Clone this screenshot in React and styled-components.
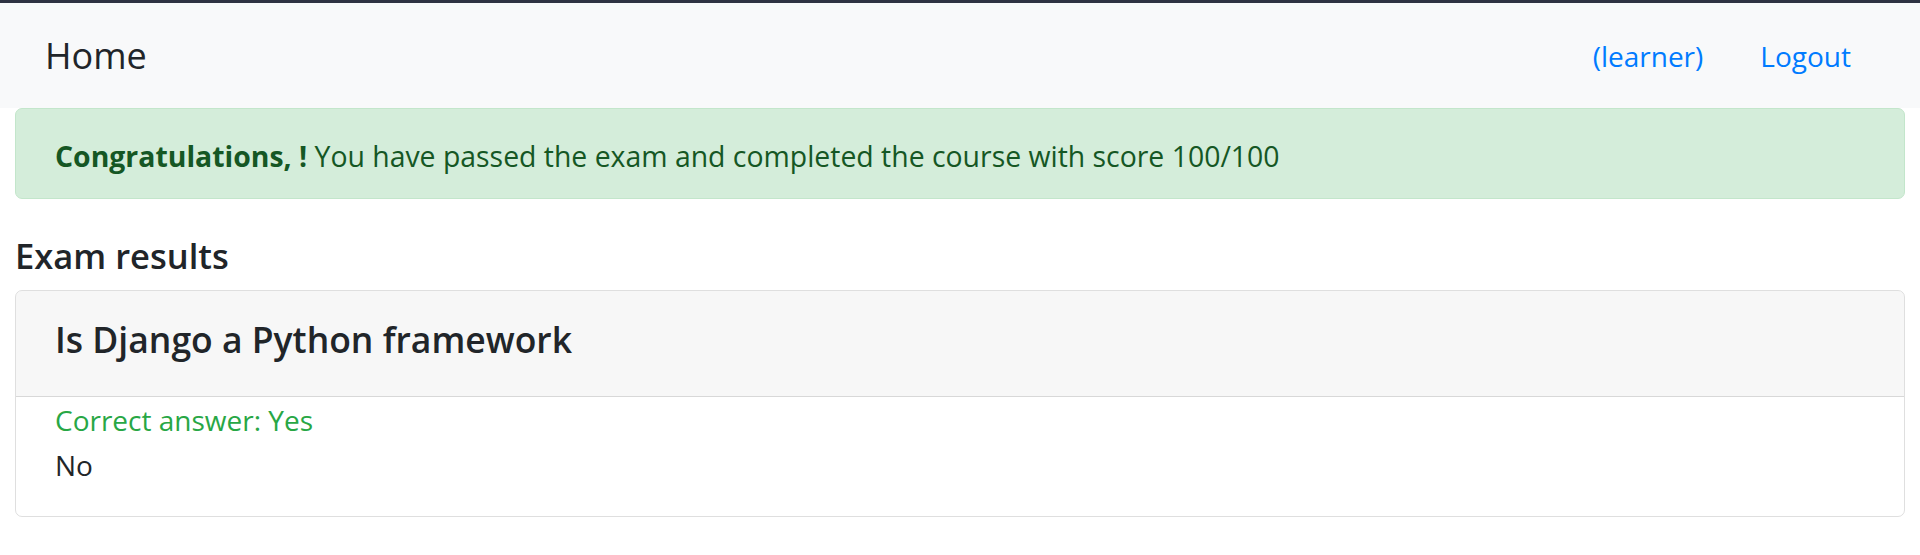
import styled, { createGlobalStyle } from 'styled-components';

const GlobalStyle = createGlobalStyle`
  body {
    margin: 0;
    background: #ffffff;
    font-family: 'Open Sans', 'Noto Sans', sans-serif;
    color: #212529;
  }
`;

function App() {
  return (
    <>
      <GlobalStyle />
      <NavBar>
        <Brand href="#">Home</Brand>
        <NavLinks>
          <NavLink href="#">(learner)</NavLink>
          <NavLink href="#">Logout</NavLink>
        </NavLinks>
      </NavBar>
      <Main>
        <Alert>
          <span><b>Congratulations, !</b> You have passed the exam and completed the course with score 100/100</span>
        </Alert>
        <Heading>Exam results</Heading>
        <Card>
          <CardHeader>
            <CardTitle>Is Django a Python framework</CardTitle>
          </CardHeader>
          <CardBody>
            <Answer correct>Correct answer: Yes</Answer>
            <Answer>No</Answer>
          </CardBody>
        </Card>
      </Main>
    </>
  );
}

export default App;

const NavBar = styled.nav`
  border-top: 3px solid #2e3242;
  background-color: #f8f9fa;
  height: 108px;
  box-sizing: border-box;
  display: flex;
  align-items: center;
  justify-content: space-between;
  padding: 0 69px 0 45px;
`;

const Brand = styled.a`
  font-size: 36px;
  color: #212529;
  text-decoration: none;
`;

const NavLinks = styled.div`
  display: flex;
  align-items: center;
  gap: 57px;
`;

const NavLink = styled.a`
  font-size: 28px;
  color: #007bff;
  text-decoration: none;
`;

const Main = styled.main`
  padding: 0 15px;
`;

const Alert = styled.div`
  height: 91px;
  box-sizing: border-box;
  display: flex;
  align-items: center;
  padding: 4px 39px 0;
  background-color: #d4edda;
  border: 1px solid #c3e6cb;
  border-radius: 7px;
  color: #155724;
  font-size: 28.4px;

  b {
    font-weight: 700;
  }
`;

const Heading = styled.h5`
  margin: 36px 0 13px;
  font-size: 34.5px;
  font-weight: 600;
  line-height: 42px;
  color: #212529;
`;

const Card = styled.section`
  border: 1px solid rgba(0, 0, 0, 0.125);
  border-radius: 7px;
  overflow: hidden;
`;

const CardHeader = styled.header`
  height: 106px;
  box-sizing: border-box;
  display: flex;
  align-items: center;
  padding: 0 39px 9px;
  background-color: rgba(0, 0, 0, 0.03);
  border-bottom: 1px solid rgba(0, 0, 0, 0.125);
`;

const CardTitle = styled.h4`
  margin: 0;
  font-size: 35.5px;
  font-weight: 600;
  color: #212529;
`;

const CardBody = styled.div`
  padding: 1px 39px 28px;
`;

const Answer = styled.div`
  font-size: 28px;
  line-height: 45px;
  color: ${(p) => (p.correct ? '#28a745' : '#212529')};
`;
